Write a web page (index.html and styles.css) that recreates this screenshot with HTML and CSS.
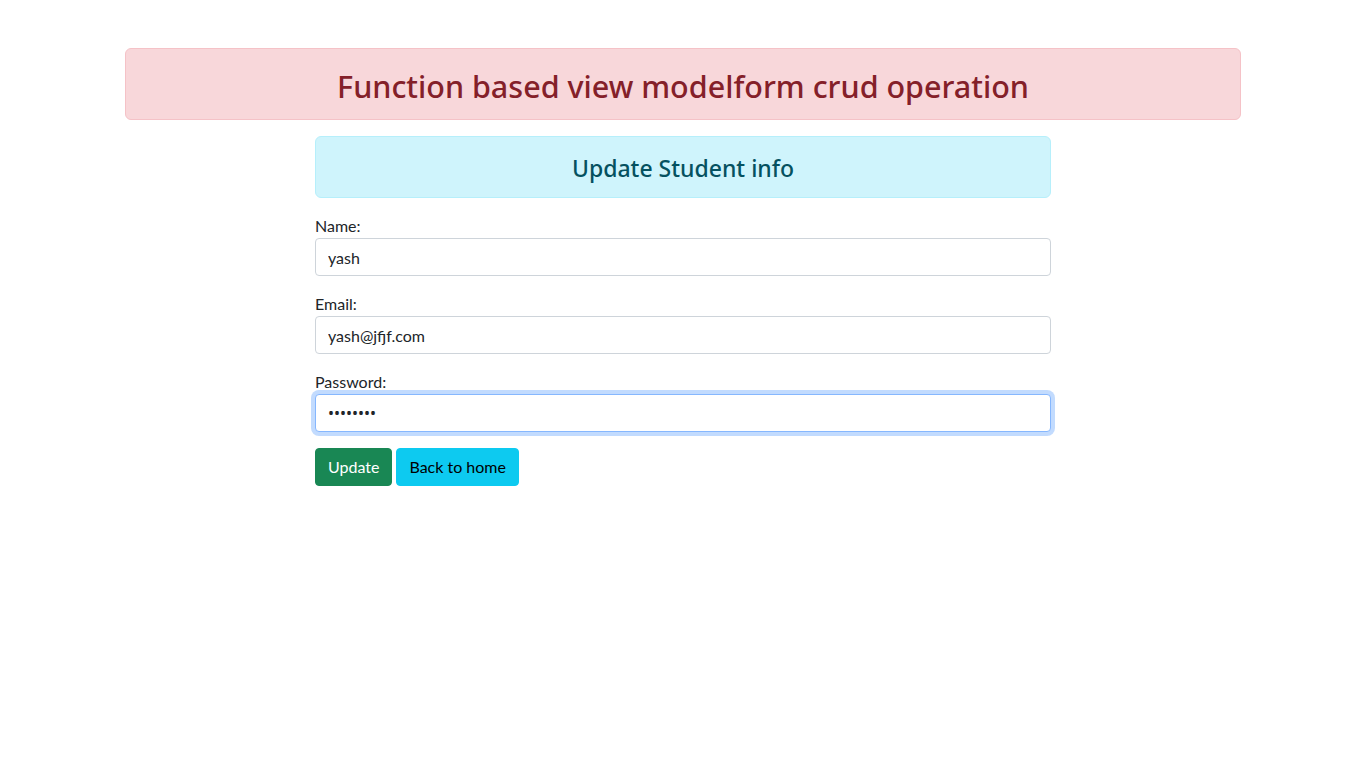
FILE: index.html
```html
<!DOCTYPE html>
<html lang="en">
<head>
<meta charset="utf-8">
<title>Update Student</title>
<link rel="stylesheet" href="styles.css">
</head>
<body>
<div class="container">
  <div class="alert alert-danger">
    <h2 class="title">Function based view modelform crud operation</h2>
  </div>
  <div class="row">
    <div class="col">
      <div class="alert alert-info">
        <h4 class="subtitle">Update Student info</h4>
      </div>
      <form class="form">
        <div class="field">
          <label class="label" for="name">Name:</label>
          <input class="control" id="name" type="text" value="yash">
        </div>
        <div class="field">
          <label class="label" for="email">Email:</label>
          <input class="control" id="email" type="email" value="yash@jfjf.com">
        </div>
        <div class="field">
          <label class="label" for="password">Password:</label>
          <input class="control control-password focused" id="password" type="password" value="12345678">
        </div>
        <div class="actions">
          <button type="button" class="btn btn-success">Update</button>
          <button type="button" class="btn btn-info">Back to home</button>
        </div>
      </form>
    </div>
  </div>
</div>
</body>
</html>
```
FILE: styles.css
```css
* { box-sizing: border-box; }
body {
  margin: 0;
  font-family: Lato, "Noto Sans", "Liberation Sans", sans-serif;
  font-size: 16px;
  line-height: 1.5;
  color: #212529;
  background: #fff;
}
.container {
  width: 1140px;
  margin: 0 auto;
  padding: 0 12px;
}
.alert {
  border: 1px solid transparent;
  border-radius: 6px;
  padding: 16px;
  margin-bottom: 16px;
  text-align: center;
}
.alert-danger {
  margin-top: 48px;
  background: #f8d7da;
  border-color: #f5c2c7;
  color: #842029;
}
.alert-info {
  background: #cff4fc;
  border-color: #b6effb;
  color: #055160;
}
.title {
  margin: 0;
  font-family: "Noto Sans", Lato, sans-serif;
  font-size: 30.5px;
  font-weight: 500;
  line-height: 38px;
  position: relative;
  top: 2px;
}
.subtitle {
  margin: 0;
  font-family: "Noto Sans", Lato, sans-serif;
  font-size: 23px;
  font-weight: 500;
  line-height: 28px;
  position: relative;
  top: 1px;
}
.row {
  display: flex;
  justify-content: center;
}
.col {
  width: 736px;
}
.field {
  margin-bottom: 16px;
}
.label {
  display: block;
  line-height: 24px;
}
.control {
  display: block;
  width: 100%;
  height: 38px;
  padding: 6px 12px;
  font: inherit;
  font-size: 16px;
  color: #212529;
  background: #fff;
  border: 1px solid #ced4da;
  border-radius: 4px;
  outline: none;
}
.control-password {
  font-family: "Noto Sans", sans-serif;
}
.focused {
  border-color: #86b7fe;
  box-shadow: 0 0 0 4px rgba(13, 110, 253, 0.25);
}
.actions {
  display: flex;
  gap: 4px;
}
.btn {
  font: inherit;
  font-size: 16px;
  line-height: 24px;
  padding: 6px 12px;
  border: 1px solid transparent;
  border-radius: 4px;
  cursor: pointer;
}
.btn-success {
  background: #198754;
  border-color: #198754;
  color: #fff;
}
.btn-info {
  background: #0dcaf0;
  border-color: #0dcaf0;
  color: #000;
}
```
